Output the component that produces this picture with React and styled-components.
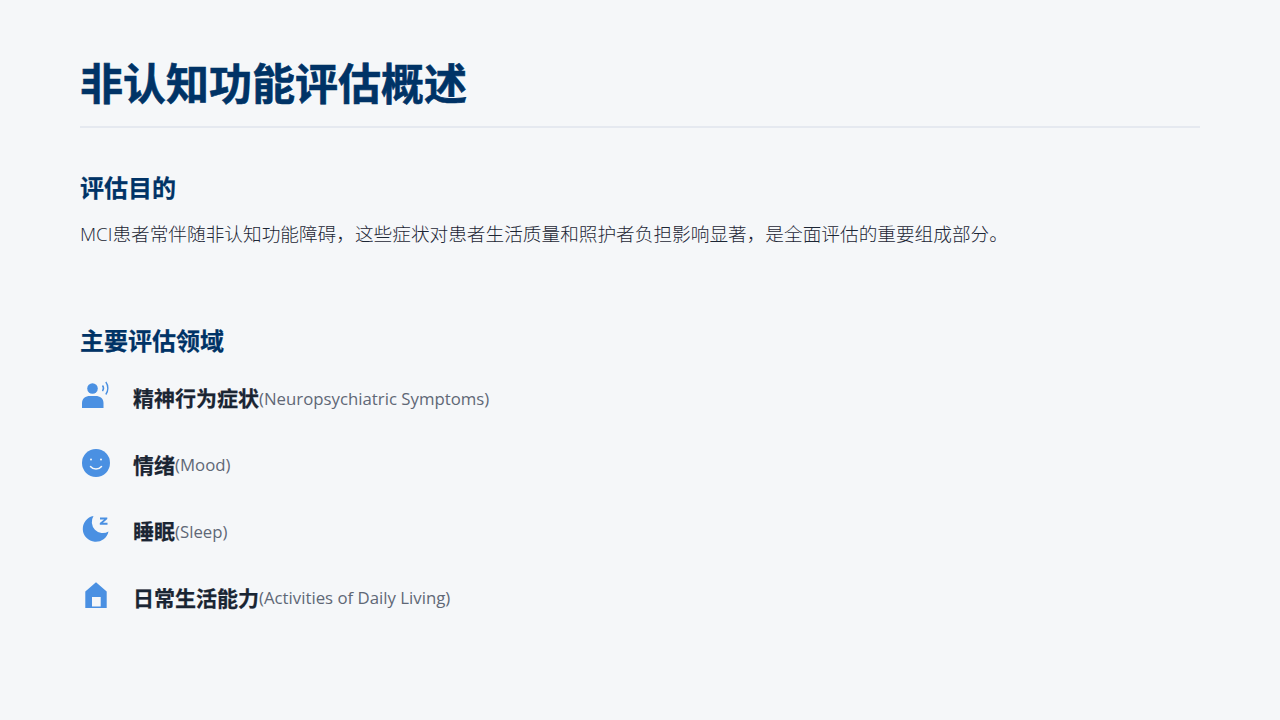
import React from 'react';
import styled, { createGlobalStyle } from 'styled-components';

const Global = createGlobalStyle`
  html, body { margin: 0; padding: 0; background: #f5f7f9; }
`;
const FONT = `"Open Sans", "Noto Sans CJK SC", sans-serif`;

const Page = styled.div`
  width: 1280px; height: 720px; box-sizing: border-box;
  padding: 54px 80px 0; background: #f5f7f9; font-family: ${FONT};
  overflow: hidden;
`;
const Header = styled.header`
  height: 72px; border-bottom: 2px solid #e5e9f0;
`;
const Title = styled.h1`
  margin: 0; font-size: 43px; line-height: 60px; font-weight: 700; color: #003366;
  -webkit-text-stroke: 0.6px #003366;
`;
const Section = styled.section`
  margin-top: ${p => p.$top}px;
`;
const Heading = styled.h2`
  margin: 0; font-size: 24px; line-height: 34px; font-weight: 700; color: #003366;
  -webkit-text-stroke: 0.25px #003366;
`;
const Body = styled.p`
  margin: 15px 0 0; font-size: 18.67px; line-height: 28px; font-weight: 300; color: #1c2635; white-space: nowrap;
`;
const List = styled.ul`
  list-style: none; margin: 17px 0 0; padding: 0; display: flex; flex-direction: column; gap: 22.67px;
`;
const Item = styled.li`
  display: flex; align-items: center; height: 44px;
`;
const IconBox = styled.span`
  width: 32px; height: 32px; margin-right: 21px; display: flex; color: #4a90e2; flex: none; transform: translateY(-1px);
`;
const Name = styled.strong`
  font-size: 21px; font-weight: 700; color: #1a2533; -webkit-text-stroke: 0.25px #1a2533;
`;
const En = styled.span`
  font-size: 16.8px; font-weight: 400; color: #5f6876; padding-top: 2px;
`;

const Svg = ({ children }) => <svg width="32" height="32" viewBox="0 0 32 32" fill="currentColor">{children}</svg>;

const SpeakIcon = () => (
  <Svg>
    <circle cx="12.500" cy="8.500" r="5.300" />
    <path d="M2 28v-5C2 18.500 5.500 16 10 16h5.500c4.500 0 8 2.500 8 7v5z" />
    <path d="M22.500 5.500c1.200 1.600 1.200 4 0 5.600" fill="none" stroke="currentColor" strokeWidth="1.400" />
    <path d="M25.800 2c2.700 3.500 2.700 9 0 12.500" fill="none" stroke="currentColor" strokeWidth="1.400" />
  </Svg>
);
const SmileIcon = () => (
  <Svg>
    <circle cx="16" cy="16" r="14" />
    <circle cx="11" cy="12.500" r="1" fill="#f5f7f9" />
    <circle cx="21" cy="12.500" r="1" fill="#f5f7f9" />
    <path d="M10.500 19.500c2.800 3.400 8.200 3.400 11 0" fill="none" stroke="#f5f7f9" strokeWidth="1.500" strokeLinecap="round" />
  </Svg>
);
const SleepIcon = () => (
  <Svg>
    <path d="M13.500 3A13 13 0 1 0 28.500 18.500 11.100 11.100 0 0 1 13.500 3z" />
    <path d="M20 4.500h7.300v1.600l-4.300 3.700h4.500v2H19.800v-1.700l4.300-3.700H20z" />
  </Svg>
);
const HomeIcon = () => (
  <Svg>
    <path fillRule="evenodd" d="M16 2.300 26.700 11.500V28H5.300V11.500zM12 17v9.500h8.700V17z" />
  </Svg>
);

const items = [
  { Icon: SpeakIcon, name: '精神行为症状', en: '(Neuropsychiatric Symptoms)' },
  { Icon: SmileIcon, name: '情绪', en: '(Mood)' },
  { Icon: SleepIcon, name: '睡眠', en: '(Sleep)' },
  { Icon: HomeIcon, name: '日常生活能力', en: '(Activities of Daily Living)' },
];

export default function App() {
  return (
    <Page>
      <Global />
      <Header><Title>非认知功能评估概述</Title></Header>
      <Section $top={43}>
        <Heading>评估目的</Heading>
        <Body>MCI患者常伴随非认知功能障碍，这些症状对患者生活质量和照护者负担影响显著，是全面评估的重要组成部分。</Body>
      </Section>
      <Section $top={76}>
        <Heading>主要评估领域</Heading>
        <List>
          {items.map(({ Icon, name, en }) => (
            <Item key={name}>
              <IconBox><Icon /></IconBox>
              <Name>{name}</Name><En>{en}</En>
            </Item>
          ))}
        </List>
      </Section>
    </Page>
  );
}
